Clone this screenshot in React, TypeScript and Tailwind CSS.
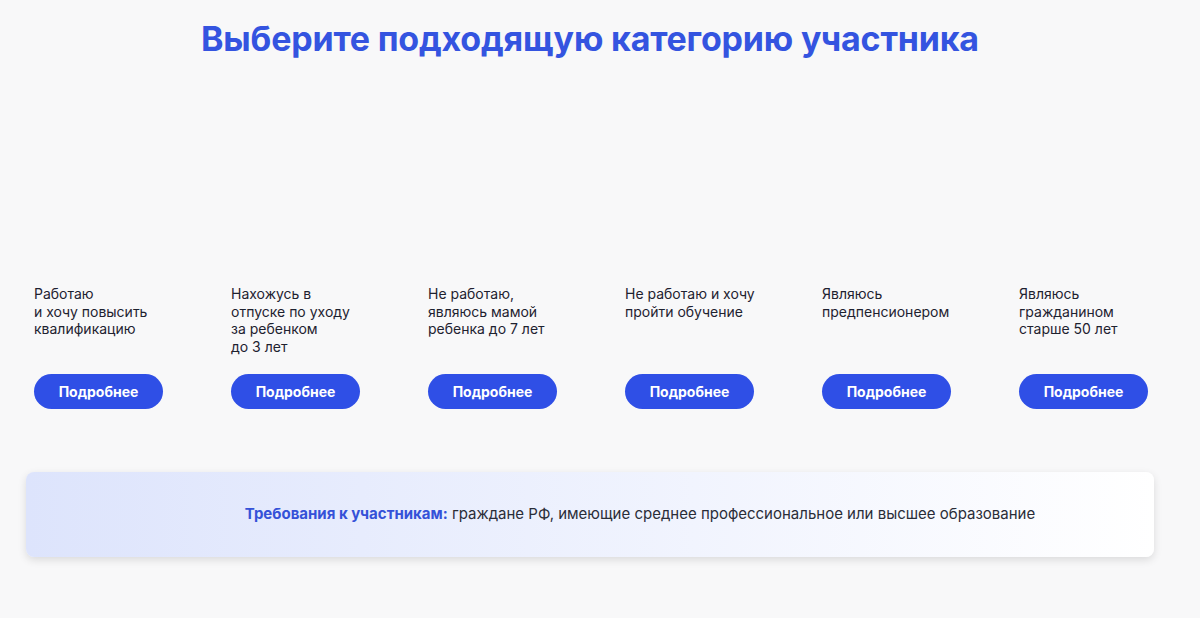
import React from 'react';

const categories: string[][] = [
  ['Работаю', 'и хочу повысить', 'квалификацию'],
  ['Нахожусь в', 'отпуске по уходу', 'за ребенком', 'до 3 лет'],
  ['Не работаю,', 'являюсь мамой', 'ребенка до 7 лет'],
  ['Не работаю и хочу', 'пройти обучение'],
  ['Являюсь', 'предпенсионером'],
  ['Являюсь', 'гражданином', 'старше 50 лет'],
];

const App: React.FC = () => {
  return (
    <div className="w-[1200px] h-[618px] bg-[#f8f8f9] overflow-hidden" style={{ fontFamily: 'Inter, "Noto Sans", sans-serif' }}>
      <h1 className="text-center text-[34px] font-bold text-[#3454e0] pt-[17px] leading-[44px] tracking-[-0.2px] pr-[20px]">
        Выберите подходящую категорию участника
      </h1>

      <div className="grid grid-cols-[repeat(6,197px)] pl-[34px] mt-[224px]">
        {categories.map((lines, i) => (
          <div key={i} className="flex flex-col">
            <p className="text-[14px] leading-[17.5px] text-[#1e2230] h-[89px]">
              {lines.map((l, j) => (
                <span key={j} className="block">{l}</span>
              ))}
            </p>
            <button className="w-[129px] h-[35px] rounded-full bg-[#2f4fe6] text-white text-[14px] font-bold">
              Подробнее
            </button>
          </div>
        ))}
      </div>

      <div className="mx-[26px] w-[1128px] mt-[63px] h-[85px] rounded-lg bg-gradient-to-r from-[#dde4fc] to-[#ffffff] shadow-[0_3px_8px_rgba(0,0,0,0.12)] flex items-center justify-center pl-[100px]">
        <p className="text-[15px] text-[#2a2d38]">
          <span className="font-bold text-[#3552d8]">Требования к участникам:</span> граждане РФ, имеющие среднее профессиональное или высшее образование
        </p>
      </div>
    </div>
  );
};

export default App;
